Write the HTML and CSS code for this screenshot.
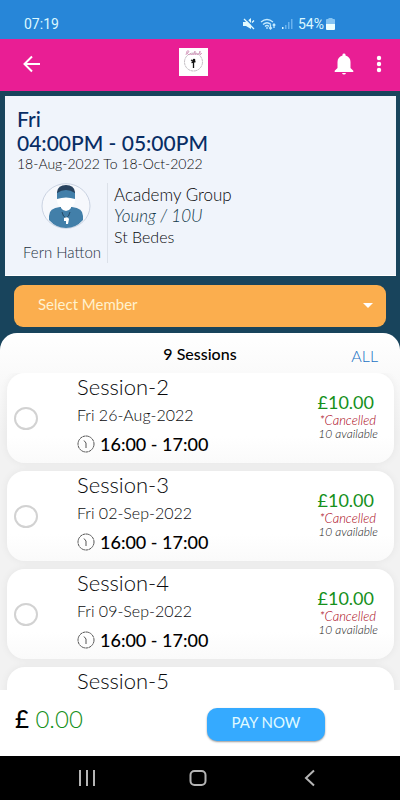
FILE: index.html
```html
<!DOCTYPE html>
<html lang="en">
<head>
<meta charset="utf-8">
<meta name="viewport" content="width=device-width, initial-scale=1">
<title>Book sessions</title>
<link rel="stylesheet" href="styles.css">
</head>
<body>
<div class="app">
  <div class="status">
    <span>07:19</span>
    <div class="status-right">
      <svg width="12" height="12" viewBox="0 0 12 12"><path d="M0 4h3l5-4v11L3 8H0z" fill="#e2fbff"/><path d="M2 0l10 10" stroke="#2786d8" stroke-width="1.500"/><path d="M1 1l10 10M9 4.500l2-2" stroke="#e2fbff" stroke-width="1.300"/></svg>
      <svg class="wifi" width="16" height="12" viewBox="0 0 16 12" fill="none" stroke="#c4eaff" stroke-width="1.300"><path d="M1 4q6-5 12 0M3 6.500q4-3.500 8 0M5 8.500q2-2 4 0"/><path d="M7 9v2M10.500 7v4M9 9.500l1.500 1.500L12 9.500M14 10V6M12.700 7.500L14 6l1.300 1.500"/></svg>
      <svg width="12" height="12" viewBox="0 0 12 12"><path d="M1 9h1.500v2H1z" fill="#d9f4ff"/><path d="M4 7h1.500v4H4zM7 4h1.500v7H7zM10 1h1.500v10H10z" fill="#69b2ee"/></svg>
      <span>54%</span>
      <svg width="9" height="12" viewBox="0 0 9 12"><path d="M2.500 0h4v1H8q1 0 1 1v4H0V2q0-1 1-1h1.500z" fill="#85c4f3"/><path d="M0 6h9v5q0 1-1 1H1q-1 0-1-1z" fill="#edffff"/></svg>
    </div>
  </div>
  <header class="appbar">
    <button class="icon-btn" aria-label="Back"><svg width="20" height="18" viewBox="0 0 20 18" fill="none" stroke="#fff" stroke-width="2"><path d="M18 9H3M10 1.500L2.500 9l7.500 7.500"/></svg></button>
    <svg class="logo" width="29" height="28" viewBox="0 0 29 28"><path d="M0 0h29v28H0z" fill="#fff"/><circle cx="14.500" cy="14" r="9" fill="none" stroke="#aaa3aa" stroke-width=".7" stroke-dasharray="3 .5"/><path d="M7 7l1-4q2-1 2 1L8 5l2 2q2-3 2 0 1-2 2-1v1l2-4v4q2-4 2 0 1-2 2-1l1-3v4l2-2" fill="none" stroke="#cf91b6" stroke-width=".8"/><path d="M12 12l2 1M12.500 14.500l4-1M14.500 13v7" stroke="#111" stroke-width="1.300"/><circle cx="15" cy="12" r="1.300" fill="#111"/></svg>
    <div class="actions">
      <button class="icon-btn" aria-label="Notifications"><svg width="20" height="22" viewBox="0 0 20 22" fill="#fff"><path d="M8.500 2.500V1.800q0-1.300 1.500-1.300t1.500 1.300v.7Q16.500 4 16.500 9v6l2.800 2.800V19H.7v-1.200L3.500 15V9q0-5 5-6.500zM8 20h4q-.5 1.500-2 1.500T8 20z"/></svg></button>
      <button class="icon-btn" aria-label="More options"><svg width="6" height="18" viewBox="0 0 6 18" fill="#fff"><circle cx="3" cy="3" r="2.200"/><circle cx="3" cy="9" r="2.200"/><circle cx="3" cy="15" r="2.200"/></svg></button>
    </div>
  </header>
  <section class="info">
    <h1>Fri<br>04:00PM - 05:00PM</h1>
    <p class="dates">18-Aug-2022 To 18-Oct-2022</p>
    <div class="details">
      <div class="coach">
        <svg class="avatar" width="50" height="46" viewBox="0 0 50 46"><ellipse cx="25" cy="23" rx="24" ry="22.300" fill="#f6f8fc" stroke="#bfc9db" stroke-width=".8"/><path d="M19 24h12q11 1 11 9v4q-7 8-17 8T8 37v-4q0-8 11-9z" fill="#427fa9"/><path d="M16 13v4q0 5 4 7v1q2 3 5 3t5-3v-1q4-2 4-7v-4z" fill="#fff"/><path d="M16 9q1-7 9-7t9 7v2H16z" fill="#27425e"/><path d="M16 10q9-6 18 0v6q-9-3-18 0z" fill="#427fa9"/><path d="M21 29q1 5 4 6 3-1 4-6" fill="none" stroke="#234966"/><path d="M23 35q4-2 5 1l-1 5h-2v-3h-2z" fill="#fff"/></svg>
        <span>Fern Hatton</span>
      </div>
      <div class="group"><p>Academy Group</p><p class="age">Young / 10U</p><p class="venue">St Bedes</p></div>
    </div>
  </section>
  <div class="member">
    <select aria-label="Select Member"><option>Select Member</option></select>
    <svg class="caret" width="10" height="5" viewBox="0 0 10 5"><path d="M0 0h10L5 5z" fill="#fff"/></svg>
  </div>
  <main class="sheet">
    <div class="sheet-head"><h2>9 Sessions</h2><button class="all">ALL</button></div>
    <ul class="list">
      <li class="card">
        <input type="checkbox" id="s2">
        <label for="s2"><span class="title">Session-2</span><span class="day">Fri 26-Aug-2022</span><span class="time"><svg class="clock" width="18" height="18" viewBox="0 0 18 18" fill="none" stroke="#555"><circle cx="9" cy="9" r="8" stroke-dasharray="3 .4"/><path d="M7 5.500L9 8v5"/></svg>16:00 - 17:00</span></label>
        <div class="price"><strong>£10.00</strong><em class="cancelled">*Cancelled</em><em>10 available</em></div>
      </li>
      <li class="card">
        <input type="checkbox" id="s3">
        <label for="s3"><span class="title">Session-3</span><span class="day">Fri 02-Sep-2022</span><span class="time"><svg class="clock" width="18" height="18" viewBox="0 0 18 18" fill="none" stroke="#555"><circle cx="9" cy="9" r="8" stroke-dasharray="3 .4"/><path d="M7 5.500L9 8v5"/></svg>16:00 - 17:00</span></label>
        <div class="price"><strong>£10.00</strong><em class="cancelled">*Cancelled</em><em>10 available</em></div>
      </li>
      <li class="card">
        <input type="checkbox" id="s4">
        <label for="s4"><span class="title">Session-4</span><span class="day">Fri 09-Sep-2022</span><span class="time"><svg class="clock" width="18" height="18" viewBox="0 0 18 18" fill="none" stroke="#555"><circle cx="9" cy="9" r="8" stroke-dasharray="3 .4"/><path d="M7 5.500L9 8v5"/></svg>16:00 - 17:00</span></label>
        <div class="price"><strong>£10.00</strong><em class="cancelled">*Cancelled</em><em>10 available</em></div>
      </li>
      <li class="card card-last"><span class="title">Session-5</span></li>
    </ul>
  </main>
  <footer class="pay">
    <p class="total"><b>£</b> 0.00</p>
    <button class="pay-btn">PAY NOW</button>
  </footer>
  <nav class="nav">
    <button class="icon-btn" aria-label="Recent apps"><svg width="18" height="18" viewBox="0 0 18 18" stroke="#b5b5b5" stroke-width="2"><path d="M2 1v16M9 1v16M16 1v16"/></svg></button>
    <button class="icon-btn" aria-label="Home"><svg width="18" height="18" viewBox="0 0 18 18" fill="none" stroke="#b5b5b5" stroke-width="2"><rect x="1.500" y="2" width="15" height="14" rx="4"/></svg></button>
    <button class="icon-btn" aria-label="Back"><svg width="18" height="18" viewBox="0 0 18 18" fill="none" stroke="#b5b5b5" stroke-width="2"><path d="M13 1.500L5 9l8 7.500"/></svg></button>
  </nav>
</div>
</body>
</html>
```
FILE: styles.css
```css
* { box-sizing: border-box; }
body { margin: 0; font-family: Lato, "Open Sans", sans-serif; font-weight: 300; color: #08090b; }
h1, h2, p, ul { margin: 0; padding: 0; }
button { font: inherit; border: 0; padding: 0; background: none; cursor: pointer; }
svg { display: block; flex: none; }
.app { display: flex; flex-direction: column; height: 100vh; background: #18445c; }
.status { display: flex; justify-content: space-between; padding: 15px 65px 6px 24px; background: #2786d8; color: #dcf8ff; font: 14px/18px Roboto, sans-serif; }
.status-right { display: flex; align-items: center; gap: 5px; }
.status-right span { margin-right: -3px; }
.appbar { display: grid; grid-template-columns: 1fr auto 1fr; align-items: center; height: 52px; padding: 0 18px 2px; background: #e91e94; }
.appbar > .icon-btn { justify-self: start; padding-left: 4px; }
.actions { display: flex; align-items: center; justify-content: flex-end; gap: 22px; }
.logo { margin: 0 14px 4px 0; }
.info { margin: 5px 4px 0 5px; padding: 11px 12px 12px; background: #f0f4fb; border-bottom: 1px solid #fff; }
.info h1 { font-size: 21px; line-height: 24px; font-weight: 500; color: #082d65; }
.dates { padding-top: 1px; font-size: 14px; line-height: 16px; }
.details { display: flex; margin-top: 11px; }
.coach { display: flex; flex-direction: column; align-items: center; gap: 12px; padding: 0 6px; border-right: 1px solid #dce1e9; font-size: 15px; line-height: 22px; color: #1c303e; white-space: nowrap; }
.avatar { margin-left: 8px; }
.group { padding: 1px 0 0 6px; font-size: 17px; line-height: 21px; }
.age { font-style: italic; color: #12384a; }
.venue { font-size: 16px; }
.member { position: relative; margin: 9px 14px 6px; }
.member select { display: block; appearance: none; width: 100%; height: 42px; padding: 0 24px 5px; border: 0; border-radius: 9px; background: #fbae4e; color: #fff2cf; font: 15px/20px Lato, sans-serif; }
.caret { position: absolute; right: 13px; top: 18px; pointer-events: none; }
.sheet { display: flex; flex: 1; flex-direction: column; min-height: 0; overflow: hidden; border-radius: 17px 17px 0 0; background: linear-gradient(#fff 0, #fafafa 40px, #f2f2f2 100px); }
.sheet-head { display: grid; flex: none; grid-template-columns: 1fr auto 1fr; align-items: center; height: 40px; padding: 2px 22px 0; }
.sheet-head h2 { grid-column: 2; font-size: 16px; line-height: 20px; font-weight: 500; color: #000; }
.all { justify-self: end; padding-top: 3px; color: #1b72c4; font-size: 16px; line-height: 24px; }
.list { display: flex; flex: 1; flex-direction: column; gap: 8px; min-height: 0; padding: 0 6px 0 7px; overflow: hidden; list-style: none; }
.card { display: flex; flex: none; align-items: center; height: 90px; padding: 0 16px 0 7px; border-radius: 18px; background: linear-gradient(#fff 70%, #fafafa); box-shadow: 0 0 9px rgba(0, 0, 0, .06); }
.card input { appearance: none; flex: none; width: 24px; height: 23px; margin: 0 39px 0 0; border: 2px solid #d2d2d2; border-radius: 50%; background: #fff; }
.card label { display: flex; flex: 1; flex-direction: column; align-self: flex-start; }
.title { font-size: 22px; line-height: 28px; }
.day { font-size: 16px; line-height: 28px; }
.time { display: flex; align-items: center; gap: 5px; font-size: 18px; line-height: 30px; font-weight: 500; color: #000; }
.price { display: flex; flex-direction: column; align-items: flex-end; padding-bottom: 4px; font-size: 12px; line-height: 14px; color: #222; }
.price strong { margin-right: 4px; font-size: 18px; line-height: 22px; font-weight: 400; color: #15901b; }
.price .cancelled { margin-right: 2px; color: #a80012; font-size: 13px; }
.card-last { align-items: flex-start; padding-left: 70px; background: #fff; }
.pay { display: flex; align-items: flex-start; justify-content: space-between; height: 66px; padding: 14px 75px 0 15px; background: #fff; }
.total { font-size: 24px; line-height: 30px; color: #15901b; }
.total b { color: #000; font-weight: 500; }
.pay-btn { width: 118px; height: 33px; margin-top: 4px; padding-bottom: 5px; border-radius: 10px; background: #35aaff; color: #e0faff; font-size: 15px; font-weight: 400; box-shadow: 0 1px 2px rgba(0, 0, 0, .4); }
.nav { display: flex; justify-content: space-around; align-items: center; height: 44px; padding: 0 34px 0 31px; background: #000; }
```
